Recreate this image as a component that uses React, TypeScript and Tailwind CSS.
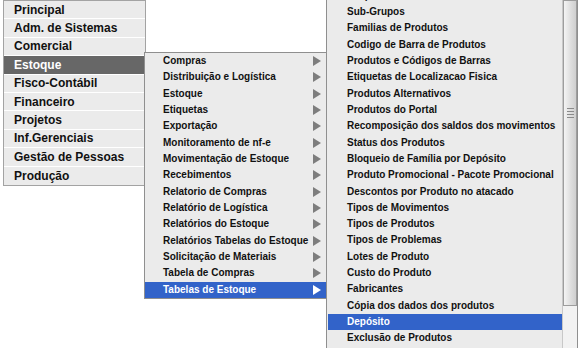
import React from 'react'

const mainItems = [
  'Principal',
  'Adm. de Sistemas',
  'Comercial',
  'Estoque',
  'Fisco-Contábil',
  'Financeiro',
  'Projetos',
  'Inf.Gerenciais',
  'Gestão de Pessoas',
  'Produção',
]

const estoqueItems = [
  'Compras',
  'Distribuição e Logística',
  'Estoque',
  'Etiquetas',
  'Exportação',
  'Monitoramento de nf-e',
  'Movimentação de Estoque',
  'Recebimentos',
  'Relatorio de Compras',
  'Relatório de Logística',
  'Relatórios do Estoque',
  'Relatórios Tabelas do Estoque',
  'Solicitação de Materiais',
  'Tabela de Compras',
  'Tabelas de Estoque',
]

const tabelasItems = [
  'Grupos de Produtos',
  'Sub-Grupos',
  'Familias de Produtos',
  'Codigo de Barra de Produtos',
  'Produtos e Códigos de Barras',
  'Etiquetas de Localizacao Fisica',
  'Produtos Alternativos',
  'Produtos do Portal',
  'Recomposição dos saldos dos movimentos',
  'Status dos Produtos',
  'Bloqueio de Família por Depósito',
  'Produto Promocional - Pacote Promocional',
  'Descontos por Produto no atacado',
  'Tipos de Movimentos',
  'Tipos de Produtos',
  'Tipos de Problemas',
  'Lotes de Produto',
  'Custo do Produto',
  'Fabricantes',
  'Cópia dos dados dos produtos',
  'Depósito',
  'Exclusão de Produtos',
]

function Arrow({ active }: { active: boolean }) {
  return (
    <svg width="8" height="10" viewBox="0 0 8 10" className="shrink-0">
      <polygon points="0,0 8,5 0,10" fill={active ? '#ffffff' : '#7d7d7d'} />
    </svg>
  )
}

export default function App() {
  return (
    <div className="relative w-[578px] h-[348px] overflow-hidden bg-white font-['Liberation_Sans',Arial,sans-serif] text-[#111]">
      {/* menu principal */}
      <div className="ml-[3px] w-[143px] border border-[#a3a3a3] bg-[#ebebeb]">
        {mainItems.map(item => (
          <div
            key={item}
            className={
              'flex h-[18.4px] items-center whitespace-nowrap border-b border-white pl-[10px] text-[12px] font-bold leading-none last:border-b-0 ' +
              (item === 'Estoque' ? 'bg-[#676767] text-white' : '')
            }
          >
            {item}
          </div>
        ))}
      </div>

      {/* submenu Estoque */}
      <div className="absolute left-[144px] top-[52px] w-[183px] border border-[#8f8f8f] bg-[#ebebeb]">
        {estoqueItems.map(item => {
          const active = item === 'Tabelas de Estoque'
          return (
            <div
              key={item}
              className={
                'flex h-[16.33px] items-center justify-between whitespace-nowrap pl-[18px] pr-[5px] text-[10px] font-bold leading-none ' +
                (active ? 'bg-[#3263c9] text-white' : '')
              }
            >
              <span>{item}</span>
              <Arrow active={active} />
            </div>
          )
        })}
      </div>

      {/* submenu Tabelas de Estoque */}
      <div className="absolute left-[326px] top-0 flex h-[348px] w-[252px] border-l border-r border-[#8f8f8f] bg-[#ebebeb]">
        <div className="flex-1 overflow-hidden pl-[1px]">
          <div className="mt-[-12.6px]">
            {tabelasItems.map(item => (
              <div
                key={item}
                className={
                  'flex h-[16.33px] items-center whitespace-nowrap pl-[19px] text-[10px] font-bold leading-none ' +
                  (item === 'Depósito' ? 'bg-[#3263c9] text-white' : '')
                }
              >
                {item}
              </div>
            ))}
          </div>
        </div>
        <div className="w-[15px] border-l border-[#c8c8c8] bg-[#f2f2f2]">
          <div className="flex h-[306px] flex-col items-center border border-[#9d9d9d] bg-[linear-gradient(to_right,#f4f4f4,#dcdcdc_60%,#cfcfcf)] pt-[107px]">
            <div className="flex flex-col gap-[2px]">
              <div className="h-px w-[7px] bg-[#8a8a8a]" />
              <div className="h-px w-[7px] bg-[#8a8a8a]" />
              <div className="h-px w-[7px] bg-[#8a8a8a]" />
              <div className="h-px w-[7px] bg-[#8a8a8a]" />
            </div>
          </div>
        </div>
      </div>
    </div>
  )
}
